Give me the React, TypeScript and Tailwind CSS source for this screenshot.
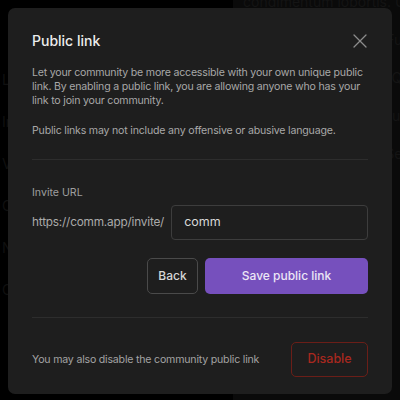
import { X } from "lucide-react";

const BACKDROP_LINES = [
  "Lorem ipsum dolor sit amet, consectetur adipiscing elit.",
  "Integer nec odio. Praesent libero. Sed cursus ante dapibus.",
  "Vestibulum sapien. Proin quam. Etiam ultrices suscipit.",
  "Curabitur sit amet mauris. Morbi in dui quis est pulvinar.",
  "Nulla facilisi. Integer lacinia sollicitudin massa.",
  "Cras metus. Sed aliquet risus a tortor integer id quam.",
];

export default function App() {
  return (
    <div
      className="relative h-[400px] w-[400px] overflow-hidden bg-black"
      style={{ fontFamily: "Inter, 'Noto Sans', sans-serif" }}
    >
      {/* page behind the dialog, dimmed */}
      <div className="flex h-full">
        <div className="flex w-[233px] flex-col gap-[22px] pt-[70px] pl-[2px] text-[14px] leading-[20px] text-[#101010]">
          {BACKDROP_LINES.map((line) => (
            <p key={line} className="whitespace-nowrap">
              {line}
            </p>
          ))}
        </div>
        <div className="flex flex-1 flex-col gap-[18px] bg-[#0a0a0a] pl-[10px] text-[14px] leading-[20px] text-[#141414]">
          <p className="-mt-[8px] whitespace-nowrap">condimentum lobortis. Ut co</p>
          <p className="whitespace-nowrap">Donec quis nunc est. Fusce is</p>
          <p className="whitespace-nowrap">Aliquam erat volutpat. Quis s</p>
          <p className="whitespace-nowrap">Nam vitae justo sed. Nunc N</p>
          <p className="whitespace-nowrap">Suspendisse potenti. Sed ic</p>
        </div>
      </div>

      {/* dialog */}
      <div className="absolute top-[8px] left-[8px] flex w-[384px] flex-col rounded-[7px] bg-[#1e1e1e] px-6 pt-[23px] pb-[17px]">
        <div className="flex h-5 items-center justify-between">
          <h2 className="text-[14px] leading-5 font-medium text-[#ececec]">Public link</h2>
          <X className="-mr-[4px] h-[24px] w-[24px] text-[#8c8c8c]" strokeWidth={1.3} />
        </div>

        <p className="mt-[15px] text-[10.6px] leading-[14px] tracking-[-0.2px] text-[#a8a8a8]">
          Let your community be more accessible with your own unique public link. By
          enabling a public link, you are allowing anyone who has your link to join your
          community.
        </p>
        <p className="mt-4 text-[10.6px] leading-[14px] tracking-[-0.2px] text-[#a8a8a8]">
          Public links may not include any offensive or abusive language.
        </p>

        <div className="mt-[21px] border-t border-[#2d2d2d]" />

        <span className="mt-[26px] text-[10.6px] leading-[14px] text-[#9e9e9e]">Invite URL</span>
        <div className="mt-[5px] flex items-center gap-[7px]">
          <span className="text-[11.8px] tracking-[-0.2px] text-[#ababab]">
            https://comm.app/invite/
          </span>
          <div className="flex h-[35px] flex-1 items-center rounded-[4px] border border-[#3d3d3d] px-[12px] text-[12.5px] text-[#d8d8d8]">
            comm
          </div>
        </div>

        <div className="mt-[18px] flex justify-end gap-[7px]">
          <button
            type="button"
            className="h-[36px] w-[51px] rounded-[5px] border border-[#4a4a4a] text-[12px] font-medium text-[#d6d6d6]"
          >
            Back
          </button>
          <button
            type="button"
            className="h-[36px] w-[163px] rounded-[5px] bg-[#7650bd] text-[12px] font-medium text-[#ece6f6]"
          >
            Save public link
          </button>
        </div>

        <div className="mt-[23px] border-t border-[#2d2d2d]" />

        <div className="mt-[24px] flex items-center justify-between">
          <span className="text-[10.6px] tracking-[-0.2px] text-[#a3a3a3]">
            You may also disable the community public link
          </span>
          <button
            type="button"
            className="h-[35px] w-[77px] rounded-[5px] border border-[#6b1e18] text-[12.5px] font-medium text-[#a8281f]"
          >
            Disable
          </button>
        </div>
      </div>
    </div>
  );
}
